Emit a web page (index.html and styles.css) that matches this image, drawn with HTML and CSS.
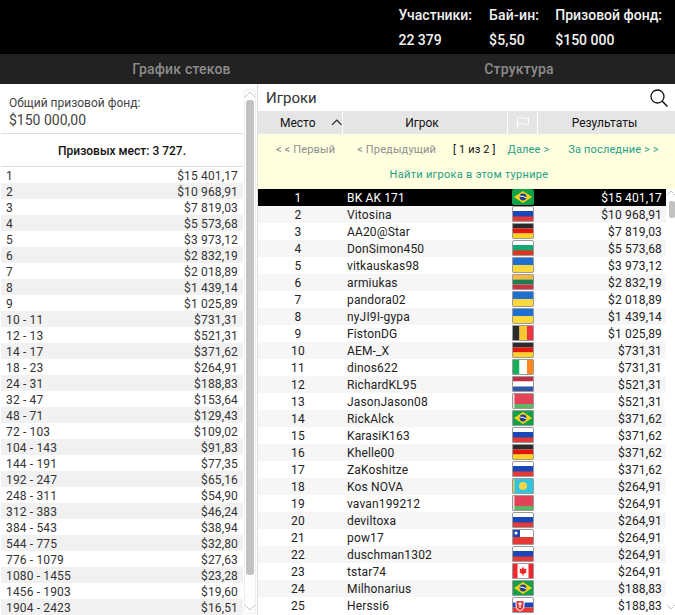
FILE: index.html
```html
<!DOCTYPE html>
<html lang="en">
<head>
    <meta charset="UTF-8">
    <title>Турнир</title>
    <link rel="stylesheet" href="styles.css">
</head>
<body>
    <!-- Flag symbols -->
    <svg class="defs" width="0" height="0">
        <symbol id="f-br" viewBox="0 0 22 16"><rect width="22" height="16" fill="#0fa04a"/><path d="M11 2 20 8 11 14 2 8z" fill="#fcd116"/><circle cx="11" cy="8" r="3.4" fill="#1c3f94"/><path d="M7.8 7.2q3.4-.6 6.3 1.6" stroke="#fff" fill="none"/></symbol>
        <symbol id="f-ru" viewBox="0 0 22 16"><rect width="22" height="16" fill="#fff"/><rect y="5" width="22" height="6" fill="#1a47b8"/><rect y="10.5" width="22" height="5.5" fill="#e53935"/></symbol>
        <symbol id="f-de" viewBox="0 0 22 16"><rect width="22" height="5.5" fill="#2b2b2b"/><rect y="5.5" width="22" height="5" fill="#e3170a"/><rect y="10.5" width="22" height="5.5" fill="#ffd21f"/></symbol>
        <symbol id="f-bg" viewBox="0 0 22 16"><rect width="22" height="16" fill="#fff"/><rect y="5" width="22" height="6" fill="#16a673"/><rect y="10.5" width="22" height="5.5" fill="#e2341d"/></symbol>
        <symbol id="f-ua" viewBox="0 0 22 16"><rect width="22" height="8" fill="#1e6fd2"/><rect y="8" width="22" height="8" fill="#ffd83d"/></symbol>
        <symbol id="f-lt" viewBox="0 0 22 16"><rect width="22" height="5.5" fill="#fdb93c"/><rect y="5.5" width="22" height="5" fill="#1c7f53"/><rect y="10.5" width="22" height="5.5" fill="#c8343f"/></symbol>
        <symbol id="f-be" viewBox="0 0 22 16"><rect width="7.5" height="16" fill="#2b2b2b"/><rect x="7.5" width="7.5" height="16" fill="#fdc82f"/><rect x="15" width="7" height="16" fill="#ef3340"/></symbol>
        <symbol id="f-ie" viewBox="0 0 22 16"><rect width="7.5" height="16" fill="#12b05a"/><rect x="7.5" width="7.5" height="16" fill="#fff"/><rect x="15" width="7" height="16" fill="#ff8620"/></symbol>
        <symbol id="f-nl" viewBox="0 0 22 16"><rect width="22" height="5.5" fill="#bf2f45"/><rect y="5.5" width="22" height="5" fill="#fff"/><rect y="10.5" width="22" height="5.5" fill="#2f56a6"/></symbol>
        <symbol id="f-by" viewBox="0 0 22 16"><rect width="22" height="11" fill="#e34358"/><rect y="11" width="22" height="5" fill="#5eb661"/><rect width="2.5" height="16" fill="#f3dfe0"/></symbol>
        <symbol id="f-kz" viewBox="0 0 22 16"><rect width="22" height="16" fill="#2fc4e0"/><circle cx="11" cy="8" r="4" fill="#f5d547"/><rect x="1" width="1.5" height="16" fill="#e6d050"/></symbol>
        <symbol id="f-cl" viewBox="0 0 22 16"><rect width="22" height="8" fill="#fff"/><rect width="8" height="8" fill="#1b46ad"/><rect y="8" width="22" height="8" fill="#e53935"/><circle cx="4" cy="4" r="1.6" fill="#fff"/></symbol>
        <symbol id="f-ca" viewBox="0 0 22 16"><rect width="22" height="16" fill="#fff"/><rect width="5.5" height="16" fill="#f2262b"/><rect x="16.5" width="5.5" height="16" fill="#f2262b"/><path d="M11 3.5 12.2 6 14.5 5.5 13.8 8.5 15 9 12 11H11.4V13H10.6V11H10L7 9 8.2 8.5 7.5 5.5 9.8 6z" fill="#f2262b"/></symbol>
        <symbol id="f-sk" viewBox="0 0 22 16"><rect width="22" height="5.5" fill="#fff"/><rect y="5.5" width="22" height="5" fill="#1a47b8"/><rect y="10.5" width="22" height="5.5" fill="#e53935"/><path d="M4 3.5h8V9q0 3.5-4 5-4-1.500-4-5z" fill="#d83a3a" stroke="#fff"/><path d="M8 5v6M6 7h4" stroke="#fff" stroke-width="1.200"/></symbol>
    </svg>

    <!-- Header -->
    <header class="top">
        <div class="stat"><b>Участники:</b><b>22 379</b></div>
        <div class="stat stat-buyin"><b>Бай-ин:</b><b>$5,50</b></div>
        <div class="stat"><b>Призовой фонд:</b><b>$150 000</b></div>
    </header>

    <!-- Tabs -->
    <nav class="tabs">
        <div class="tab tab-left">График стеков</div>
        <div class="tab tab-right">Структура</div>
    </nav>

    <div class="main">
        <!-- Prizes -->
        <section class="prizes">
            <div class="prizes-body">
                <div class="total">
                    <div class="total-label">Общий призовой фонд:</div>
                    <div class="total-value">$150 000,00</div>
                </div>
                <div class="places">Призовых мест: 3 727.</div>
                <div class="prize-list">
                    <div class="prize"><span>1</span><span>$15 401,17</span></div>
                    <div class="prize"><span>2</span><span>$10 968,91</span></div>
                    <div class="prize"><span>3</span><span>$7 819,03</span></div>
                    <div class="prize"><span>4</span><span>$5 573,68</span></div>
                    <div class="prize"><span>5</span><span>$3 973,12</span></div>
                    <div class="prize"><span>6</span><span>$2 832,19</span></div>
                    <div class="prize"><span>7</span><span>$2 018,89</span></div>
                    <div class="prize"><span>8</span><span>$1 439,14</span></div>
                    <div class="prize"><span>9</span><span>$1 025,89</span></div>
                    <div class="prize"><span>10 - 11</span><span>$731,31</span></div>
                    <div class="prize"><span>12 - 13</span><span>$521,31</span></div>
                    <div class="prize"><span>14 - 17</span><span>$371,62</span></div>
                    <div class="prize"><span>18 - 23</span><span>$264,91</span></div>
                    <div class="prize"><span>24 - 31</span><span>$188,83</span></div>
                    <div class="prize"><span>32 - 47</span><span>$153,64</span></div>
                    <div class="prize"><span>48 - 71</span><span>$129,43</span></div>
                    <div class="prize"><span>72 - 103</span><span>$109,02</span></div>
                    <div class="prize"><span>104 - 143</span><span>$91,83</span></div>
                    <div class="prize"><span>144 - 191</span><span>$77,35</span></div>
                    <div class="prize"><span>192 - 247</span><span>$65,16</span></div>
                    <div class="prize"><span>248 - 311</span><span>$54,90</span></div>
                    <div class="prize"><span>312 - 383</span><span>$46,24</span></div>
                    <div class="prize"><span>384 - 543</span><span>$38,94</span></div>
                    <div class="prize"><span>544 - 775</span><span>$32,80</span></div>
                    <div class="prize"><span>776 - 1079</span><span>$27,63</span></div>
                    <div class="prize"><span>1080 - 1455</span><span>$23,28</span></div>
                    <div class="prize"><span>1456 - 1903</span><span>$19,60</span></div>
                    <div class="prize"><span>1904 - 2423</span><span>$16,51</span></div>
                </div>
            </div>
            <div class="scroll scroll-left">
                <svg class="arrow" viewBox="0 0 10 6" width="10" height="6"><path d="M0 6 5 1l5 5" fill="none" stroke="#c4c4c4"/></svg>
                <div class="thumb"></div>
                <svg class="arrow arrow-end" viewBox="0 0 10 6" width="10" height="6"><path d="M0 0l5 5 5-5" fill="none" stroke="#c4c4c4"/></svg>
            </div>
        </section>

        <!-- Players -->
        <section class="players">
            <div class="players-title">
                <span>Игроки</span>
                <svg class="search" viewBox="0 0 18 18" width="18" height="18"><circle cx="7.500" cy="7.500" r="6.500" fill="none" stroke="#111" stroke-width="1.300"/><path d="M12.300 12.300 17.500 17.500" stroke="#111" stroke-width="1.500"/></svg>
            </div>
            <div class="thead">
                <div class="th th-place">Место
                    <svg class="sort" viewBox="0 0 12 7" width="12" height="7"><path d="M1 6 6 1l5 5" fill="none" stroke="#222" stroke-width="1.200"/></svg>
                </div>
                <div class="th th-name">Игрок</div>
                <div class="th th-flag">
                    <svg viewBox="0 0 14 12" width="14" height="12"><path d="M1.500 12V1q3-1.200 5.500 0t5.500 0v6q-3 1.200-5.500 0t-5.500 0" fill="none" stroke="#fff"/></svg>
                </div>
                <div class="th th-result">Результаты</div>
            </div>
            <div class="pager">
                <div class="pager-row">
                    <span class="off">&lt; &lt; Первый</span>
                    <span class="off prev">&lt; Предыдущий</span>
                    <span class="count">[ 1 из 2 ]</span>
                    <span class="link next">Далее &gt;</span>
                    <span class="link last">За последние &gt; &gt;</span>
                </div>
                <div class="link find">Найти игрока в этом турнире</div>
            </div>
            <div class="rows-wrap">
                <div class="rows">
                    <div class="row row-active"><span class="c-place">1</span><span class="c-name">BK AK 171</span><svg class="flag"><use href="#f-br"/></svg><span class="c-result">$15 401,17</span></div>
                    <div class="row"><span class="c-place">2</span><span class="c-name">Vitosina</span><svg class="flag"><use href="#f-ru"/></svg><span class="c-result">$10 968,91</span></div>
                    <div class="row"><span class="c-place">3</span><span class="c-name">AA20@Star</span><svg class="flag"><use href="#f-de"/></svg><span class="c-result">$7 819,03</span></div>
                    <div class="row"><span class="c-place">4</span><span class="c-name">DonSimon450</span><svg class="flag"><use href="#f-bg"/></svg><span class="c-result">$5 573,68</span></div>
                    <div class="row"><span class="c-place">5</span><span class="c-name">vitkauskas98</span><svg class="flag"><use href="#f-ua"/></svg><span class="c-result">$3 973,12</span></div>
                    <div class="row"><span class="c-place">6</span><span class="c-name">armiukas</span><svg class="flag"><use href="#f-lt"/></svg><span class="c-result">$2 832,19</span></div>
                    <div class="row"><span class="c-place">7</span><span class="c-name">pandora02</span><svg class="flag"><use href="#f-ua"/></svg><span class="c-result">$2 018,89</span></div>
                    <div class="row"><span class="c-place">8</span><span class="c-name">nyJI9I-gypa</span><svg class="flag"><use href="#f-ua"/></svg><span class="c-result">$1 439,14</span></div>
                    <div class="row"><span class="c-place">9</span><span class="c-name">FistonDG</span><svg class="flag"><use href="#f-be"/></svg><span class="c-result">$1 025,89</span></div>
                    <div class="row"><span class="c-place">10</span><span class="c-name">AEM-_X</span><svg class="flag"><use href="#f-de"/></svg><span class="c-result">$731,31</span></div>
                    <div class="row"><span class="c-place">11</span><span class="c-name">dinos622</span><svg class="flag"><use href="#f-ie"/></svg><span class="c-result">$731,31</span></div>
                    <div class="row"><span class="c-place">12</span><span class="c-name">RichardKL95</span><svg class="flag"><use href="#f-nl"/></svg><span class="c-result">$521,31</span></div>
                    <div class="row"><span class="c-place">13</span><span class="c-name">JasonJason08</span><svg class="flag"><use href="#f-by"/></svg><span class="c-result">$521,31</span></div>
                    <div class="row"><span class="c-place">14</span><span class="c-name">RickAlck</span><svg class="flag"><use href="#f-br"/></svg><span class="c-result">$371,62</span></div>
                    <div class="row"><span class="c-place">15</span><span class="c-name">KarasiK163</span><svg class="flag"><use href="#f-ru"/></svg><span class="c-result">$371,62</span></div>
                    <div class="row"><span class="c-place">16</span><span class="c-name">Khelle00</span><svg class="flag"><use href="#f-de"/></svg><span class="c-result">$371,62</span></div>
                    <div class="row"><span class="c-place">17</span><span class="c-name">ZaKoshitze</span><svg class="flag"><use href="#f-ru"/></svg><span class="c-result">$371,62</span></div>
                    <div class="row"><span class="c-place">18</span><span class="c-name">Kos NOVA</span><svg class="flag"><use href="#f-kz"/></svg><span class="c-result">$264,91</span></div>
                    <div class="row"><span class="c-place">19</span><span class="c-name">vavan199212</span><svg class="flag"><use href="#f-by"/></svg><span class="c-result">$264,91</span></div>
                    <div class="row"><span class="c-place">20</span><span class="c-name">deviltoxa</span><svg class="flag"><use href="#f-ru"/></svg><span class="c-result">$264,91</span></div>
                    <div class="row"><span class="c-place">21</span><span class="c-name">pow17</span><svg class="flag"><use href="#f-cl"/></svg><span class="c-result">$264,91</span></div>
                    <div class="row"><span class="c-place">22</span><span class="c-name">duschman1302</span><svg class="flag"><use href="#f-ru"/></svg><span class="c-result">$264,91</span></div>
                    <div class="row"><span class="c-place">23</span><span class="c-name">tstar74</span><svg class="flag"><use href="#f-ca"/></svg><span class="c-result">$264,91</span></div>
                    <div class="row"><span class="c-place">24</span><span class="c-name">Milhonarius</span><svg class="flag"><use href="#f-br"/></svg><span class="c-result">$188,83</span></div>
                    <div class="row"><span class="c-place">25</span><span class="c-name">Herssi6</span><svg class="flag"><use href="#f-sk"/></svg><span class="c-result">$188,83</span></div>
                </div>
                <div class="scroll scroll-right">
                    <svg class="arrow" viewBox="0 0 8 5" width="8" height="5"><path d="M0 5 4 1l4 4" fill="none" stroke="#c4c4c4"/></svg>
                    <div class="thumb"></div>
                    <svg class="arrow arrow-end" viewBox="0 0 8 5" width="8" height="5"><path d="M0 0l4 4 4-4" fill="none" stroke="#c4c4c4"/></svg>
                </div>
            </div>
        </section>
    </div>
</body>
</html>
```

FILE: styles.css
```css
body {
    margin: 0;
    width: 675px;
    height: 615px;
    overflow: hidden;
    font-family: Roboto, Arial, sans-serif;
    font-size: 12px;
    color: #222;
    background: #fff;
}

.defs {
    position: absolute;
}

/* Header */
.top {
    height: 54px;
    background: #000;
    display: flex;
    justify-content: flex-end;
    gap: 16px;
    padding-right: 13px;
}

.stat {
    display: flex;
    flex-direction: column;
    padding-top: 7px;
    gap: 8px;
    color: #f2f2f2;
    font-size: 14px;
    line-height: 17px;
}

.stat b {
    font-weight: 500;
}

.stat-buyin {
    min-width: 50px;
    letter-spacing: 0.2px;
    margin-right: 0;
    margin-left: 1px;
}

/* Tabs */
.tabs {
    height: 30px;
    display: flex;
    background: #222;
    color: #8c8c8c;
    font-size: 14px;
    font-weight: 500;
    letter-spacing: 0.2px;
    line-height: 30px;
    text-align: center;
}

.tab-left {
    width: 363px;
}

.tab-right {
    width: 312px;
}

/* Main */
.main {
    display: flex;
    height: 531px;
}

.prizes {
    width: 258px;
    flex: none;
    display: flex;
    box-sizing: border-box;
    padding-left: 1px;
    border-right: 1px solid #ddd;
}

.prizes-body {
    width: 242px;
}

.total {
    height: 50px;
    box-sizing: border-box;
    padding: 11px 0 0 8px;
    border-bottom: 1px solid #ddd;
    color: #444;
    line-height: 17px;
}

.total-value {
    font-size: 14px;
}

.places {
    height: 33px;
    box-sizing: border-box;
    border-bottom: 1px solid #ddd;
    text-align: center;
    font-weight: 500;
    color: #111;
    line-height: 34px;
}

.prize {
    display: flex;
    justify-content: space-between;
    height: 16px;
    line-height: 18px;
    letter-spacing: 0.15px;
    padding: 0 5px;
    color: #333;
}

.prize:nth-child(even) {
    background: #f1f1f1;
}

.scroll {
    display: flex;
    flex-direction: column;
    align-items: center;
}

.arrow {
    flex: none;
}

.arrow-end {
    margin-top: auto;
}

.scroll-left {
    width: 12px;
    margin: 5px 0 0 1px;
    height: 525px;
    border: 1px solid #eee;
    border-radius: 3px;
    box-sizing: border-box;
    padding: 1px 0 2px;
}

.scroll-left .thumb {
    width: 8px;
    height: 475px;
    margin-top: 3px;
    background: #c2c2c2;
    border-radius: 3px;
}

/* Players */
.players {
    flex: 1;
    min-width: 0;
    display: flex;
    flex-direction: column;
}

.players-title {
    height: 27px;
    display: flex;
    justify-content: space-between;
    align-items: center;
    padding: 0 7px 0 8px;
    font-size: 15px;
    color: #333;
}

.thead {
    height: 23px;
    display: flex;
    background: #e5e5e5;
    line-height: 24px;
    color: #111;
    text-align: center;
}

.th {
    border-right: 1px solid #fff;
    box-sizing: border-box;
}

.th-place {
    width: 85px;
    display: flex;
    align-items: center;
    padding-left: 22px;
    gap: 15px;
}

.th-name {
    width: 165px;
    padding-right: 6px;
}

.th-flag {
    width: 30px;
    display: flex;
    align-items: center;
    justify-content: center;
}

.th-result {
    flex: 1;
    border-right: none;
    padding-right: 4px;
}

.pager {
    height: 55px;
    box-sizing: border-box;
    padding-top: 8px;
    background: #ffffe0;
    font-size: 11px;
    letter-spacing: 0.15px;
    line-height: 16px;
}

.pager-row {
    display: flex;
    padding-left: 18px;
}

.off {
    color: #8e8e8e;
}

.link {
    color: #1fa085;
}

.prev {
    margin-left: 22px;
}

.count {
    margin-left: 17px;
    color: #111;
}

.next {
    margin-left: 12px;
}

.last {
    margin-left: 19px;
}

.find {
    margin-top: 9px;
    text-align: center;
    padding-left: 5px;
    letter-spacing: 0.3px;
}

.rows-wrap {
    display: flex;
    flex: 1;
    min-height: 0;
}

.rows {
    width: 408px;
    flex: none;
}

.row {
    height: 17px;
    display: flex;
    align-items: flex-start;
    line-height: 18px;
    letter-spacing: 0.15px;
    color: #222;
}

.row:nth-child(even) {
    background: #f6f6f6;
}

.row-active {
    background: #000;
    color: #fff;
}

.c-place {
    width: 80px;
    text-align: center;
}

.c-name {
    width: 174px;
    padding-left: 9px;
    box-sizing: border-box;
}

.flag {
    width: 22px;
    height: 16px;
    flex: none;
    border-radius: 2px;
    outline: 1px solid #9a9a9a;
    outline-offset: -1px;
}

.row-active .flag {
    outline: none;
}

.c-result {
    flex: 1;
    text-align: right;
    padding-right: 4px;
}

.scroll-right {
    width: 9px;
    padding: 1px 0 5px;
    box-sizing: border-box;
}

.scroll-right .thumb {
    width: 6px;
    height: 17px;
    margin: 6px 0 0 2px;
    background: #c2c2c2;
    border-radius: 2px;
}
```
